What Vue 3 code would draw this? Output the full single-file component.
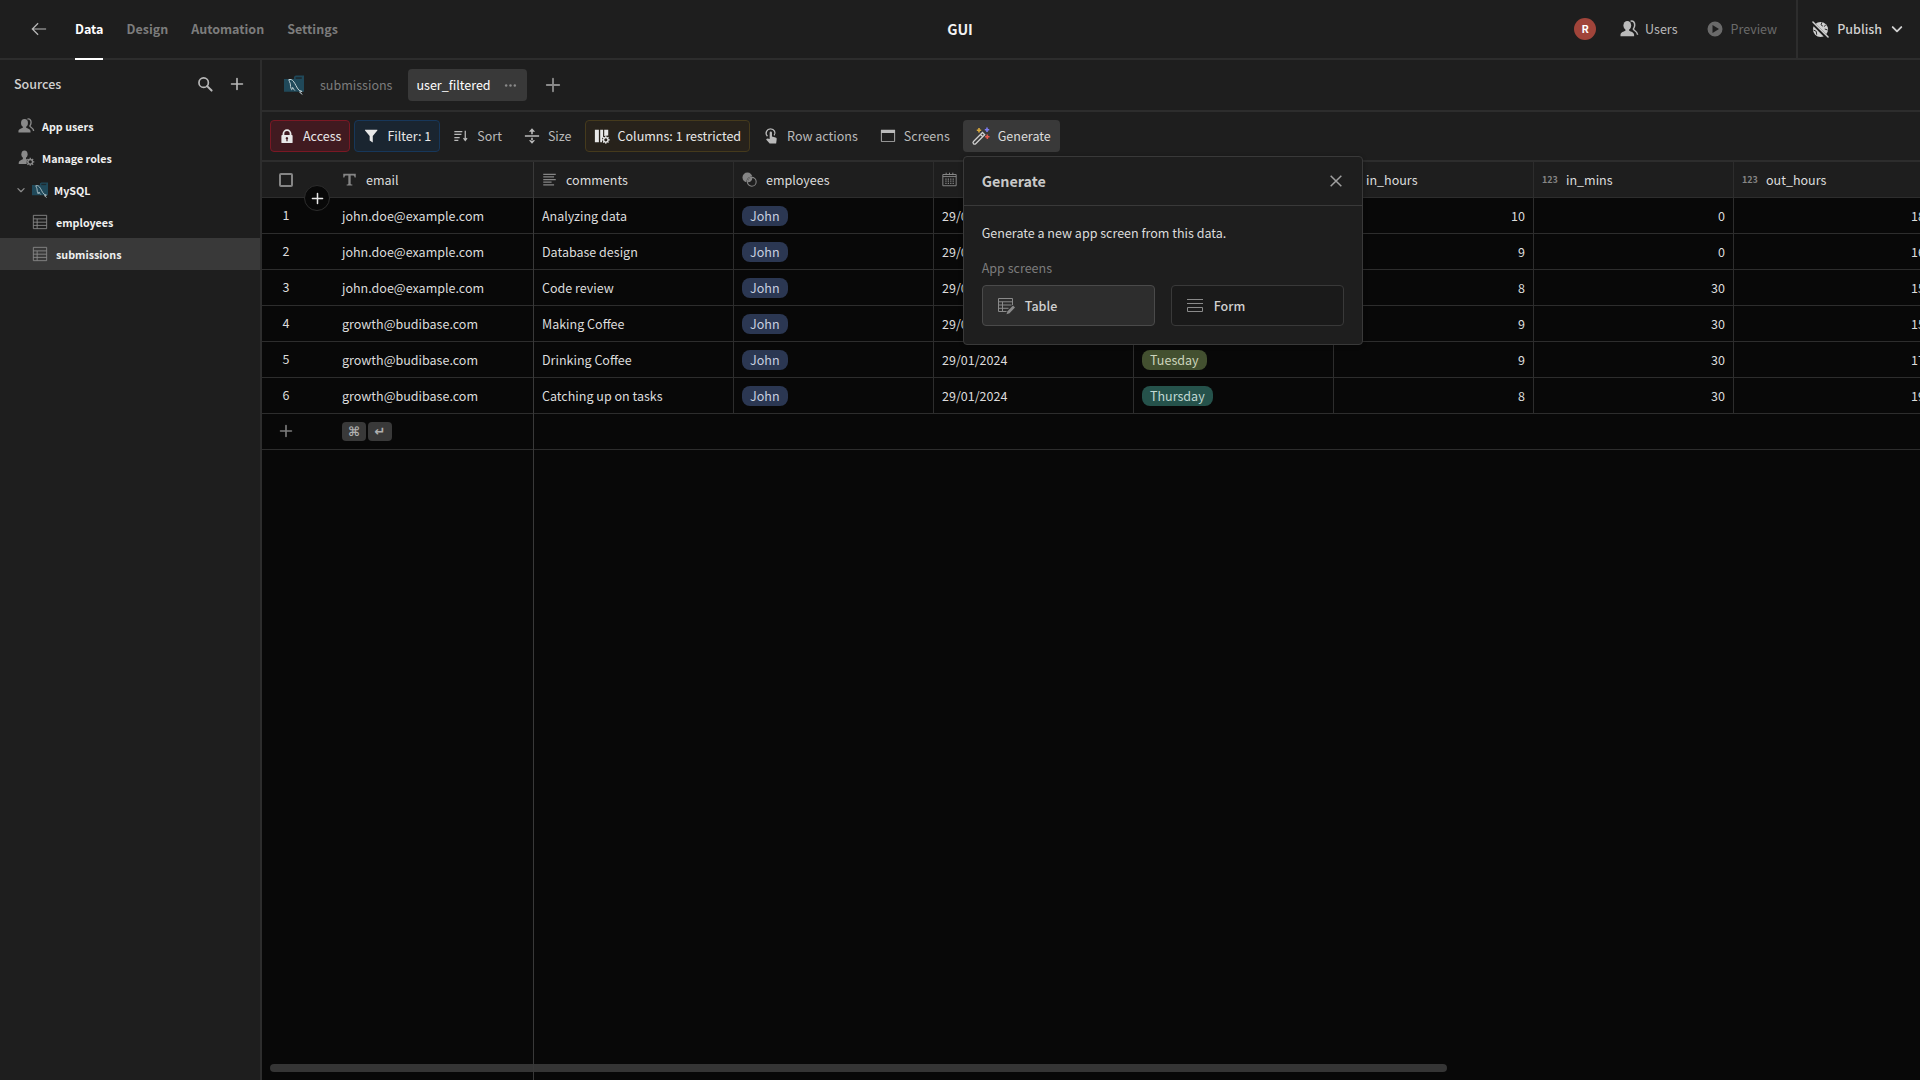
<script setup>
import { h, ref } from 'vue'

const glyphs = {
  back: '<path d="M17 9H2M8 2.500 1.500 9 8 15.500" fill="none" stroke="currentColor" stroke-width="1.400"/>',
  users: '<ellipse cx="7.300" cy="5.600" rx="3.900" ry="4.600"/><path d="M5.500 9h3.600v1.600c0 .8 5 1.300 5 4.200V16.200H.5v-1.400c0-2.900 5-3.400 5-4.200z"/><path d="M10.600 1.200c2.600-.7 4.300 1.200 4.100 4-.1 2-.9 3.100-1.400 3.900 0 1.200 4.300 2.200 4.300 5.600" fill="none" stroke="currentColor" stroke-width="1.500"/>',
  roles: '<ellipse cx="7.300" cy="4.800" rx="3.500" ry="4.300"/><path d="M5.500 8h3.500v1.800c.2.600 1 .8 1.800 1-1.300 1.200-1.500 3-1 4.900H.8v-1c0-3.200 4.700-3.700 4.700-4.900z"/><g fill="none" stroke="currentColor"><circle cx="13.800" cy="13.300" r="2.600" stroke-width="1.500"/><path d="M13.800 8.800v2M13.800 15.800v2M9.300 13.300h2M16.300 13.300h2M10.600 10.100l1.400 1.400M15.600 15.100l1.400 1.400M10.600 16.500l1.400-1.400M15.600 11.500l1.400-1.400" stroke-width="1.500"/></g>',
  chevron: '<path d="M3.500 6.500 9 12l5.500-5.500" fill="none" stroke="currentColor" stroke-width="2.400" stroke-linecap="round" stroke-linejoin="round"/>',
  mysql: '<path d="M0 3.500h9V1.500L10.500.5H18V15H0z" fill="#20495a"/><path d="M10.500 2h5.500v1.500h-5.500z" fill="#1e2a30"/><path d="M4.300 4.200c1.500-.6 3 .1 4 1.300 2 2.300 2.900 5.800 5.200 8.200l2.800 1.100-2.300.6 2.500 2.100M4.300 4.200c.4 1.500 1 2.400 1.300 3.400.3 1.800.1 3.600 1.300 5.600.8-.5.700-1.300.9-2 .6 1.200 1 2 2 2.800" fill="none" stroke="#c3d2d6" stroke-width=".9"/>',
  table: '<path d="M1.500 1.500h15v15h-15zM1.500 5.500h15M1.500 9.200h15M1.500 12.800h15M5.800 5.500v11" fill="none" stroke="currentColor"/>',
  search: '<circle cx="7.500" cy="7.500" r="5.300" fill="none" stroke="currentColor" stroke-width="1.900"/><path d="m11.400 11.400 5 5" stroke="currentColor" stroke-width="2.300" stroke-linecap="round"/>',
  plus: '<path d="M9 2v14M2 9h14" fill="none" stroke="currentColor" stroke-width="2.100" stroke-linecap="round"/>',
  play: '<path fill-rule="evenodd" d="M9 1.500a7.500 7.500 0 1 0 0 15 7.500 7.500 0 0 0 0-15zM6.500 5l6.500 4-6.500 4z"/>',
  globe: '<path d="M9 1a8 8 0 1 0 0 16A8 8 0 0 0 9 1z"/><path d="M10.500 1.500 9.500 4l2 1.500M14.500 4l-1.500 2M1.500 9.500l3 1.500.500 3.500M13.500 8.500l3 1" fill="none" stroke="#1e1e1e"/><path d="M0 1.500 16.500 18" stroke="#1e1e1e" stroke-width="3.600"/><path d="m1 1 16 16" stroke="currentColor" stroke-width="1.600" stroke-linecap="round"/>',
  lock: '<path fill-rule="evenodd" d="M4 8V6.500a5 5 0 0 1 10 0V8h.5c.5 0 .8.300.8.800v7.400c0 .5-.3.800-.8.800h-11c-.5 0-.8-.3-.8-.8V8.800c0-.5.3-.8.8-.8zm2 0h6V6.500a3 3 0 0 0-6 0zm1.500 3.500c0 .7.400 1 .8 1.200V15h1.400v-2.300a1.400 1.400 0 1 0-2.200-1.200z"/>',
  filter: '<path d="M2.700 2h13c.5 0 .7.500.4.900L11 9v7.200L7.500 14V9L2.300 2.900C2 2.500 2.200 2 2.700 2z"/>',
  sort: '<path d="M1.500 4h9M1.500 7.300h8M1.500 10.700h6M1.500 14H6" stroke="currentColor" stroke-width="1.400"/><path d="M13.800 3v11m-2-2.500 2 2.500 2-2.500" fill="none" stroke="currentColor" stroke-width="1.400"/>',
  size: '<path d="M1 8.100h16v1.800H1zM8.100 3.500h1.800V7H8.100zM8.100 11h1.800v3.500H8.100zM9 .3l3.500 4h-7zM9 17.700l3.500-4h-7z"/>',
  columns: '<path d="M1 2h4.500v14H1zM7 2h3.200v8.500L9 12v4H7zM11.500 2H16v6.500l-4.500.5z"/><circle cx="13.300" cy="13.300" r="2.500" fill="none" stroke="currentColor" stroke-width="1.400"/><path d="M13.300 9v2M13.300 15.700v2M9 13.300h2M15.700 13.300h2M10.300 10.300l1.400 1.400M15 15l1.300 1.300M10.300 16.300l1.400-1.400M15 11.700l1.300-1.400" stroke="currentColor" stroke-width="1.300"/>',
  touch: '<path d="M7.500 12.500V5.300a1.300 1.300 0 0 1 2.600 0v4.400l4 1c1 .3 1.400.9 1.300 1.900l-.6 4.800H7.500l-4-4.600c.7-1.300 2.400-1.300 4-.3z"/><path d="M5 9.300C1.600 5.800 4.500.9 8.600 1c4 0 6.300 4.200 3.900 7.300" fill="none" stroke="currentColor" stroke-width="1.400"/>',
  screen: '<path fill-rule="evenodd" d="M1.500 2h15c.3 0 .5.200.5.500v12.500c0 .3-.2.500-.5.500h-15a.5.5 0 0 1-.5-.5V2.500c0-.3.200-.5.500-.5zM2 5.500v9h14v-9z"/>',
  wand: '<path d="m1.500 14.500 9-9 2.200 2.200-9 9a1.500 1.500 0 0 1-2.200-2.200zM8.500 7.500l2 2" fill="none" stroke="#cfcfcf" stroke-width="1.300"/><path d="M7 1v4.400M4.800 3.200h4.400" stroke="#d8a83c" stroke-width="1.600"/><path d="M15 .5V5M12.800 2.700h4.400" stroke="#7c7cf0" stroke-width="1.600"/><path d="M15.300 7.600V12M13.100 9.800h4.400" stroke="#e2574c" stroke-width="1.600"/>',
  text: '<path d="M1.500 2h15v4.500h-1.400c-.2-1.600-.9-2.300-2.200-2.300H10.400v9.700c0 .9.500 1.200 2 1.200v1.200H5.600v-1.200c1.500 0 2-.3 2-1.200V4.200H5.100c-1.300 0-2 .7-2.200 2.300H1.500z"/>',
  lines: '<path d="M1.500 2.700h15M1.500 5.800h13M1.500 9h15M1.500 12.100h10M1.500 15.300h13" stroke="currentColor" stroke-width="1.500"/>',
  link: '<circle cx="6.500" cy="6.500" r="5.900"/><circle cx="11.700" cy="11.700" r="6.300" fill="#1e1e1e"/><circle cx="11.700" cy="11.700" r="5.300" fill="none" stroke="currentColor" stroke-width="1.300"/><path d="M12.400 7a5.600 5.600 0 0 1-5.400 5.400A5.600 5.600 0 0 1 12.400 7z"/>',
  calendar: '<path d="M1 3h16v13.500H1zM1 5.500h16M5 .8v3M13 .8v3M9 .8v3" fill="none" stroke="currentColor" stroke-width="1.200"/><path d="M4 8.500h10.500M4 11h10.500M4 13.500h10.500" stroke="currentColor" stroke-width="1.500" stroke-dasharray="1.500 1.400"/>',
  close: '<path d="m3 3 12 12M15 3 3 15" fill="none" stroke="currentColor" stroke-width="1.700"/>',
  tableEdit: '<path d="M9.500 14.500H1.500v-13h14V8M1.500 4.800h14M1.500 8h13M1.500 11.300h10M5.500 4.800v9.700" fill="none" stroke="currentColor"/><path d="m16 8.500 2 2-5.500 5.800-3 1 1-3z"/>',
  form: '<path d="M1 2.500h16M1 6.500h16M1.500 10.500h15v4h-15z" fill="none" stroke="currentColor"/>',
  more: '<circle cx="3" cy="9" r="1.700"/><circle cx="9" cy="9" r="1.700"/><circle cx="15" cy="9" r="1.700"/>'
}

const Icon = ({ name, size = 18 }) =>
  h('svg', {
    viewBox: '0 0 18 18',
    width: size,
    height: size,
    fill: 'currentColor',
    overflow: 'visible',
    'aria-hidden': 'true',
    innerHTML: glyphs[name]
  })
Icon.props = ['name', 'size']

const sections = ['Data', 'Design', 'Automation', 'Settings']

const sources = [
  { label: 'App users', icon: 'users', level: 'top' },
  { label: 'Manage roles', icon: 'roles', level: 'top' },
  { label: 'MySQL', icon: 'mysql', level: 'group' },
  { label: 'employees', icon: 'table', level: 'child' },
  { label: 'submissions', icon: 'table', level: 'child', selected: true }
]

const tools = [
  { label: 'Access', icon: 'lock', tone: 'red' },
  { label: 'Filter: 1', icon: 'filter', tone: 'blue' },
  { label: 'Sort', icon: 'sort' },
  { label: 'Size', icon: 'size' },
  { label: 'Columns: 1 restricted', icon: 'columns', tone: 'amber' },
  { label: 'Row actions', icon: 'touch' },
  { label: 'Screens', icon: 'screen' }
]

const columns = [
  { label: 'email', icon: 'text' },
  { label: 'comments', icon: 'lines' },
  { label: 'employees', icon: 'link' },
  { label: '', icon: 'calendar' },
  { label: '' },
  { label: 'in_hours' },
  { label: 'in_mins', number: true },
  { label: 'out_hours', number: true }
]

const john = 'john.doe@example.com'
const growth = 'growth@budibase.com'
const rows = [
  { email: john, comment: 'Analyzing data', inHours: 10, inMins: 0, outHours: 18 },
  { email: john, comment: 'Database design', inHours: 9, inMins: 0, outHours: 16 },
  { email: john, comment: 'Code review', inHours: 8, inMins: 30, outHours: 15 },
  { email: growth, comment: 'Making Coffee', inHours: 9, inMins: 30, outHours: 15 },
  { email: growth, comment: 'Drinking Coffee', day: 'Tuesday', inHours: 9, inMins: 30, outHours: 17 },
  { email: growth, comment: 'Catching up on tasks', day: 'Thursday', inHours: 8, inMins: 30, outHours: 19 }
]

const open = ref(true)
</script>

<template>
  <div class="app">
    <header class="topbar">
      <div class="side">
        <button class="plain back" aria-label="Back"><Icon name="back" :size="16" /></button>
        <nav class="sections">
          <a v-for="(s, i) in sections" :key="s" href="#" :class="{ active: i === 0 }">{{ s }}</a>
        </nav>
      </div>
      <h1>GUI</h1>
      <div class="side end">
        <span class="avatar">R</span>
        <button class="plain action"><Icon name="users" />Users</button>
        <button class="plain action preview" disabled><Icon name="play" />Preview</button>
        <button class="plain publish"><Icon name="globe" :size="17" />Publish<Icon name="chevron" :size="14" /></button>
      </div>
    </header>

    <div class="body">
      <aside class="sidebar">
        <div class="sources-head">
          <h2>Sources</h2>
          <button class="plain" aria-label="Search"><Icon name="search" :size="16" /></button>
          <button class="plain" aria-label="Add source"><Icon name="plus" :size="14" /></button>
        </div>
        <a v-for="s in sources" :key="s.label" href="#" class="source" :class="[s.level, { selected: s.selected }]">
          <Icon v-if="s.level === 'group'" name="chevron" :size="10" />
          <Icon :name="s.icon" :size="16" />
          <span>{{ s.label }}</span>
        </a>
      </aside>

      <main class="main">
        <div class="views">
          <Icon name="mysql" :size="20" />
          <a href="#" class="view">submissions</a>
          <a href="#" class="view current">user_filtered<Icon name="more" :size="13" /></a>
          <button class="plain add-view" aria-label="Add view"><Icon name="plus" :size="16" /></button>
        </div>

        <div class="toolbar">
          <button v-for="t in tools" :key="t.label" class="tool" :class="t.tone">
            <Icon :name="t.icon" :size="16" />{{ t.label }}
          </button>
          <div class="generate">
            <button class="tool pressed" @click="open = !open"><Icon name="wand" />Generate</button>
            <section v-if="open" class="popover">
              <div class="popover-head">
                <h3>Generate</h3>
                <button class="plain" aria-label="Close" @click="open = false"><Icon name="close" :size="16" /></button>
              </div>
              <div class="popover-body">
                <p>Generate a new app screen from this data.</p>
                <p class="hint">App screens</p>
                <div class="choices">
                  <button class="choice hover"><Icon name="tableEdit" />Table</button>
                  <button class="choice"><Icon name="form" />Form</button>
                </div>
              </div>
            </section>
          </div>
        </div>

        <div class="grid">
          <table>
            <colgroup>
              <col class="gutter-col" />
              <col v-for="(c, i) in columns" :key="i" class="data-col" />
            </colgroup>
            <thead>
              <tr>
                <th class="gutter" scope="col">
                  <div class="mark"><input type="checkbox" aria-label="Select all rows" /></div>
                </th>
                <th v-for="(c, i) in columns" :key="i" scope="col">
                  <div class="head">
                    <span class="head-icon">
                      <Icon v-if="c.icon" :name="c.icon" :size="15" />
                      <span v-else-if="c.number" class="digits">123</span>
                    </span>
                    {{ c.label }}
                  </div>
                </th>
              </tr>
            </thead>
            <tbody>
              <tr v-for="(r, i) in rows" :key="i">
                <td class="gutter"><div class="mark">{{ i + 1 }}</div></td>
                <td>{{ r.email }}</td>
                <td>{{ r.comment }}</td>
                <td><span class="badge">John</span></td>
                <td>29/01/2024</td>
                <td><span v-if="r.day" class="badge" :class="r.day.toLowerCase()">{{ r.day }}</span></td>
                <td class="num">{{ r.inHours }}</td>
                <td class="num">{{ r.inMins }}</td>
                <td class="num">{{ r.outHours }}</td>
              </tr>
              <tr class="new-row">
                <td class="gutter"><div class="mark"><Icon name="plus" :size="14" /></div></td>
                <td :colspan="columns.length"><div class="keys"><kbd>⌘</kbd><kbd>↵</kbd></div></td>
              </tr>
            </tbody>
          </table>
          <button class="plain insert" aria-label="Insert row"><Icon name="plus" :size="13" /></button>
          <div class="scrollbar"></div>
          <div class="sticky-edge"></div>
        </div>
      </main>
    </div>
  </div>
</template>

<style>
body {
  background: #080808;
}
</style>

<style scoped>
.app {
  display: flex;
  flex-direction: column;
  min-height: 100vh;
  overflow: hidden;
  background: #1e1e1e;
  color: #dcdcdc;
  font-family: "Noto Sans CJK SC", "Noto Sans", sans-serif;
  font-size: 14px;
  font-size-adjust: 0.486;
  line-height: 20px;
}
.app * {
  box-sizing: border-box;
}
h1, h2, h3, p {
  margin: 0;
}
a {
  color: inherit;
  text-decoration: none;
}
button {
  font: inherit;
  font-size-adjust: inherit;
  color: inherit;
  cursor: pointer;
}
svg {
  display: block;
  flex: none;
}
.plain {
  display: flex;
  align-items: center;
  padding: 0;
  border: 0;
  background: none;
}

.topbar {
  display: flex;
  align-items: stretch;
  height: 60px;
  border-bottom: 2px solid #2d2d2d;
}
.topbar h1 {
  align-self: center;
  font-size: 16px;
  font-weight: 700;
  color: #f2f2f2;
}
.side {
  display: flex;
  flex: 1 1 0;
  align-items: stretch;
}
.back {
  margin: 0 28px 0 31px;
  color: #b8b8b8;
}
.sections {
  display: flex;
  gap: 23px;
  font-weight: 700;
  color: #7c7c7c;
}
.sections a {
  display: flex;
  align-items: center;
  height: 60px;
  border-bottom: 2px solid transparent;
}
.sections .active {
  color: #fff;
  border-color: #fff;
}
.end {
  justify-content: flex-end;
  align-items: center;
}
.avatar {
  display: flex;
  align-items: center;
  justify-content: center;
  width: 22px;
  height: 22px;
  margin-right: 24px;
  border-radius: 50%;
  background: #a0443a;
  color: #fff;
  font-size: 12px;
  font-weight: 700;
}
.action {
  gap: 7px;
  margin-right: 28px;
  color: #bababa;
}
.action.preview {
  margin-right: 19px;
  color: #6a6a6a;
}
.publish {
  gap: 8px;
  height: 58px;
  padding: 0 16px 0 14px;
  border-left: 2px solid #2d2d2d;
  color: #d0d0d0;
  font-weight: 500;
}

.body {
  display: flex;
  flex: 1;
}
.sidebar {
  flex: none;
  width: 262px;
  border-right: 2px solid #2d2d2d;
}
.sources-head {
  display: flex;
  align-items: center;
  gap: 17px;
  height: 48px;
  margin-bottom: 2px;
  padding: 0 16px 0 14px;
  color: #b8b8b8;
}
.sources-head h2 {
  flex: 1;
  font-size: 14px;
  font-weight: 500;
  color: #d0d0d0;
}
.source {
  display: flex;
  align-items: center;
  gap: 8px;
  height: 32px;
  padding-left: 18px;
  font-size: 12px;
  font-weight: 700;
  color: #8a8a8a;
}
.source span {
  padding-top: 2px;
  color: #f0f0f0;
}
.source.group {
  gap: 6px;
  padding-left: 16px;
}
.source.child {
  padding-left: 32px;
}
.source.selected {
  background: #393939;
}

.main {
  display: flex;
  flex-direction: column;
  flex: 1;
  min-width: 0;
}
.views {
  display: flex;
  align-items: center;
  height: 52px;
  padding-left: 22px;
  border-bottom: 2px solid #2d2d2d;
}
.view {
  display: flex;
  align-items: center;
  gap: 13px;
  height: 32px;
  margin-left: 8px;
  padding: 0 8px;
  border-radius: 4px;
  color: #7c7c7c;
}
.view.current {
  padding-right: 10px;
  background: #393939;
  color: #fff;
}
.view svg {
  color: #8a8a8a;
}
.add-view {
  margin-left: 18px;
  color: #8a8a8a;
}

.toolbar {
  display: flex;
  align-items: center;
  gap: 4px;
  height: 50px;
  padding-left: 8px;
  border-bottom: 2px solid #2d2d2d;
}
.tool {
  display: flex;
  align-items: center;
  gap: 8px;
  height: 32px;
  padding: 0 8px;
  border: 1px solid transparent;
  border-radius: 4px;
  background: none;
  color: #bababa;
  white-space: nowrap;
}
.tool.red {
  background: #401a20;
  border-color: #7a1824;
  color: #e8e8e8;
}
.tool.blue {
  background: #1a2530;
  border-color: #17375a;
  color: #e8e8e8;
}
.tool.amber {
  background: #27221b;
  border-color: #453a1c;
  color: #e8e8e8;
}
.tool.pressed {
  background: #393939;
  color: #dcdcdc;
}
.generate {
  position: relative;
}
.popover {
  position: absolute;
  z-index: 5;
  top: 36px;
  left: 0;
  width: 400px;
  border: 1px solid #393939;
  border-radius: 4px;
  background: #1e1e1e;
  box-shadow: 0 1px 4px rgba(0, 0, 0, 0.3);
}
.popover-head {
  display: flex;
  align-items: center;
  justify-content: space-between;
  height: 49px;
  padding: 0 18px;
  border-bottom: 1px solid #393939;
  color: #a0a0a0;
}
.popover-head h3 {
  font-size: 16px;
  font-weight: 700;
  color: #c8c8c8;
}
.popover-body {
  padding: 17px 18px 18px;
}
.popover-body .hint {
  margin: 15px 0 7px;
  color: #7c7c7c;
}
.choices {
  display: grid;
  grid-template-columns: 1fr 1fr;
  gap: 16px;
}
.choice {
  display: flex;
  align-items: center;
  gap: 10px;
  height: 41px;
  padding: 0 14px;
  border: 1px solid #393939;
  border-radius: 4px;
  background: #1a1a1a;
  color: #d0d0d0;
  font-weight: 500;
}
.choice svg {
  color: #8a8a8a;
}
.choice.hover {
  background: #2d2d2d;
  border-color: #4a4a4a;
}

.grid {
  position: relative;
  flex: 1;
  overflow: hidden;
  background: #080808;
}
table {
  width: 1672px;
  table-layout: fixed;
  border-collapse: separate;
  border-spacing: 0;
}
.gutter-col {
  width: 72px;
}
.data-col {
  width: 200px;
}
th, td {
  height: 36px;
  padding: 0 8px;
  border-right: 1px solid #2d2d2d;
  border-bottom: 1px solid #2d2d2d;
  font-weight: 400;
  text-align: left;
  white-space: nowrap;
}
th {
  background: #1e1e1e;
}
.gutter {
  padding: 0;
  border-right: 0;
}
.mark {
  display: flex;
  align-items: center;
  justify-content: center;
  width: 48px;
}
td .mark {
  padding-bottom: 2px;
}
.mark input {
  appearance: none;
  width: 14px;
  height: 14px;
  margin: 0;
  border: 2px solid #858585;
  border-radius: 2px;
}
.mark svg {
  color: #7c7c7c;
}
.head {
  display: flex;
  align-items: center;
  gap: 6px;
}
.head-icon {
  display: flex;
  align-items: center;
  width: 18px;
  color: #858585;
}
.digits {
  font-size: 10px;
  font-weight: 700;
}
.num {
  text-align: right;
}
.badge {
  display: inline-block;
  height: 20px;
  padding: 0 8px;
  border-radius: 8px;
  background: #2b3752;
  color: #c8d0e0;
  vertical-align: middle;
}
.badge.tuesday {
  background: #435030;
  color: #ccd4bc;
}
.badge.thursday {
  background: #25524b;
  color: #c0d8d4;
}
.keys {
  display: flex;
  gap: 2px;
}
kbd {
  display: flex;
  align-items: center;
  justify-content: center;
  width: 24px;
  height: 19px;
  border-radius: 4px;
  background: #393939;
  color: #b0b0b0;
  font-family: "DejaVu Sans", sans-serif;
  font-size: 13px;
  font-weight: 700;
  font-size-adjust: none;
}
.insert {
  position: absolute;
  top: 23px;
  left: 42px;
  justify-content: center;
  width: 26px;
  height: 26px;
  border: 1px solid #2d2d2d;
  border-radius: 50%;
  background: #080808;
  color: #e8e8e8;
}
.scrollbar {
  position: absolute;
  bottom: 8px;
  left: 8px;
  width: 71%;
  height: 8px;
  border-radius: 4px;
  background: #353535;
}
.sticky-edge {
  position: absolute;
  top: 0;
  bottom: 0;
  left: 271px;
  width: 1px;
  background: #393939;
}
</style>
